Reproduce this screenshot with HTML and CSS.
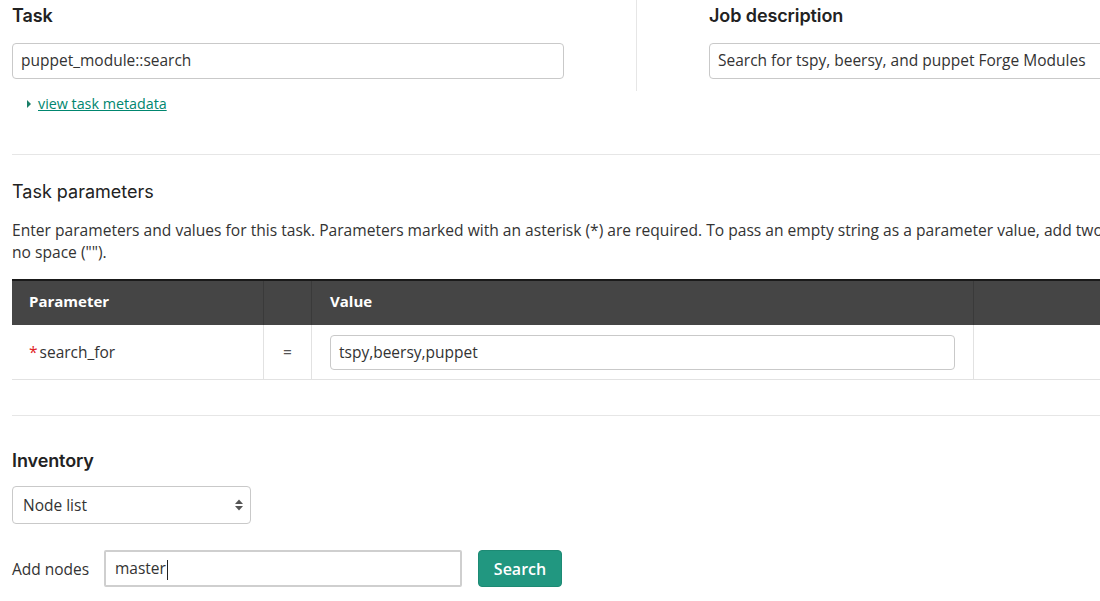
FILE: index.html
```html
<!DOCTYPE html>
<html>
<head>
<meta charset="utf-8">
<link rel="stylesheet" href="styles.css">
</head>
<body>
<div class="page">
  <div class="top">
    <div class="col col-task">
      <h2 class="label">Task</h2>
      <div class="input task-input">puppet_module::search</div>
      <div class="meta"><span class="tri"></span><a class="meta-link" href="#">view task metadata</a></div>
    </div>
    <div class="divider"></div>
    <div class="col col-job">
      <h2 class="label">Job description</h2>
      <div class="input job-input">Search for tspy, beersy, and puppet Forge Modules</div>
    </div>
  </div>
  <hr class="rule rule-1">
  <h3 class="sub">Task parameters</h3>
  <p class="desc">Enter parameters and values for this task. Parameters marked with an asterisk (*) are required. To pass an empty string as a parameter value, add two double quotes with no space ("").</p>
  <div class="table">
    <div class="row head">
      <div class="c c1">Parameter</div>
      <div class="c c2"></div>
      <div class="c c3">Value</div>
      <div class="c c4"></div>
    </div>
    <div class="row body">
      <div class="c c1"><span class="req">*</span>search_for</div>
      <div class="c c2 eq">=</div>
      <div class="c c3"><div class="input val-input">tspy,beersy,puppet</div></div>
      <div class="c c4"></div>
    </div>
  </div>
  <hr class="rule rule-2">
  <h2 class="label inv">Inventory</h2>
  <div class="select">
    <span>Node list</span>
    <svg class="arrows" width="10" height="14" viewBox="0 0 10 14"><path d="M1 6 L5 1.5 L9 6 Z" fill="#555"/><path d="M1 8 L5 12.5 L9 8 Z" fill="#555"/></svg>
  </div>
  <div class="add">
    <span class="add-label">Add nodes</span>
    <div class="input node-input">master<span class="caret"></span></div>
    <button class="btn">Search</button>
  </div>
</div>
</body>
</html>
```

FILE: styles.css
```css
html, body {
  margin: 0;
  padding: 0;
  background: #fff;
  overflow: hidden;
}
body {
  font-family: "Open Sans", "Liberation Sans", sans-serif;
  color: #333;
  width: 1100px;
  height: 601px;
}
.page {
  width: 1300px;
  padding-left: 12px;
  box-sizing: border-box;
}
.top {
  display: flex;
  height: 136px;
}
.col-task {
  width: 624px;
}
.divider {
  width: 1px;
  background: #e6e6e6;
  height: 91px;
}
.col-job {
  padding-left: 72px;
  width: 500px;
}
.label {
  font-family: Inter, "Liberation Sans", sans-serif;
  font-weight: 600;
  font-size: 18px;
  color: #222;
  margin: 0;
  padding-top: 5px;
  line-height: 22px;
  letter-spacing: -0.1px;
}
.input {
  box-sizing: border-box;
  border: 1px solid #c9c9c9;
  border-radius: 4px;
  height: 35px;
  font-size: 15.5px;
  line-height: 33px;
  padding-left: 8px;
  color: #333;
  background: #fff;
  white-space: nowrap;
  overflow: hidden;
}
.task-input {
  width: 552px;
  height: 36px;
  margin-top: 16px;
}
.job-input {
  width: 440px;
  height: 36px;
  margin-top: 16px;
}
.meta {
  margin-top: 15px;
  padding-left: 15px;
  display: flex;
  align-items: center;
  font-size: 14.3px;
  line-height: 20px;
}
.tri {
  width: 0;
  height: 0;
  border-left: 4px solid #1a7f68;
  border-top: 4px solid transparent;
  border-bottom: 4px solid transparent;
  margin-right: 7px;
}
.meta-link {
  color: #00866f;
  text-decoration: underline;
}
.rule {
  border: 0;
  height: 1px;
  background: #e6e6e6;
  margin: 0;
}
.rule-1 {
  margin-top: 18px;
}
.sub {
  font-family: Inter, "Liberation Sans", sans-serif;
  font-weight: 400;
  font-size: 18px;
  color: #222;
  margin: 25px 0 0 0;
  line-height: 24px;
}
.desc {
  font-size: 15.6px;
  line-height: 22px;
  margin: 15px 0 0 0;
  width: 1255px;
  color: #333;
}
.table {
  margin-top: 16px;
  width: 1200px;
}
.row {
  display: flex;
}
.head {
  background: #454545;
  border-top: 2px solid #1a1a1a;
  height: 44px;
  color: #fff;
  font-weight: 700;
  font-size: 15px;
}
.head .c {
  line-height: 41px;
  border-right: 1px solid #3a3a3a;
}
.body {
  height: 54px;
  border-bottom: 1px solid #e2e2e2;
  font-size: 15.5px;
}
.body .c {
  border-right: 1px solid #e2e2e2;
  display: flex;
  align-items: center;
}
.c {
  box-sizing: border-box;
}
.c1 {
  width: 252px;
  padding-left: 17px;
}
.c2 {
  width: 48px;
}
.c3 {
  width: 662px;
  padding-left: 18px;
}
.c4 {
  flex: 1;
  border-right: 0 !important;
}
.eq {
  justify-content: center;
  color: #555;
}
.req {
  color: #e0201d;
  margin-right: 2px;
}
.val-input {
  width: 625px;
  height: 35px;
  line-height: 33px;
  font-size: 15.5px;
}
.rule-2 {
  margin-top: 35px;
}
.inv {
  margin-top: 29px;
  padding-top: 5px;
}
.select {
  margin-top: 14px;
  width: 239px;
  height: 38px;
  box-sizing: border-box;
  border: 1px solid #c9c9c9;
  border-radius: 4px;
  display: flex;
  align-items: center;
  justify-content: space-between;
  padding: 0 6px 0 10px;
  font-size: 15.5px;
  color: #333;
}
.add {
  display: flex;
  align-items: center;
  margin-top: 26px;
}
.add-label {
  font-size: 15.5px;
  width: 92px;
  color: #333;
}
.node-input {
  width: 358px;
  height: 37px;
  border: 2px solid #cfcfcf;
  border-radius: 2px;
  line-height: 33px;
  padding-left: 9px;
}
.caret {
  display: inline-block;
  width: 1px;
  height: 20px;
  background: #222;
  vertical-align: middle;
  margin-left: 1px;
}
.btn {
  margin-left: 16px;
  width: 84px;
  height: 37px;
  background: #219780;
  border: 1px solid #1d8a74;
  border-radius: 4px;
  color: #fff;
  font-family: "Open Sans", "Liberation Sans", sans-serif;
  font-size: 16px;
  font-weight: 600;
  padding: 0;
}
```
